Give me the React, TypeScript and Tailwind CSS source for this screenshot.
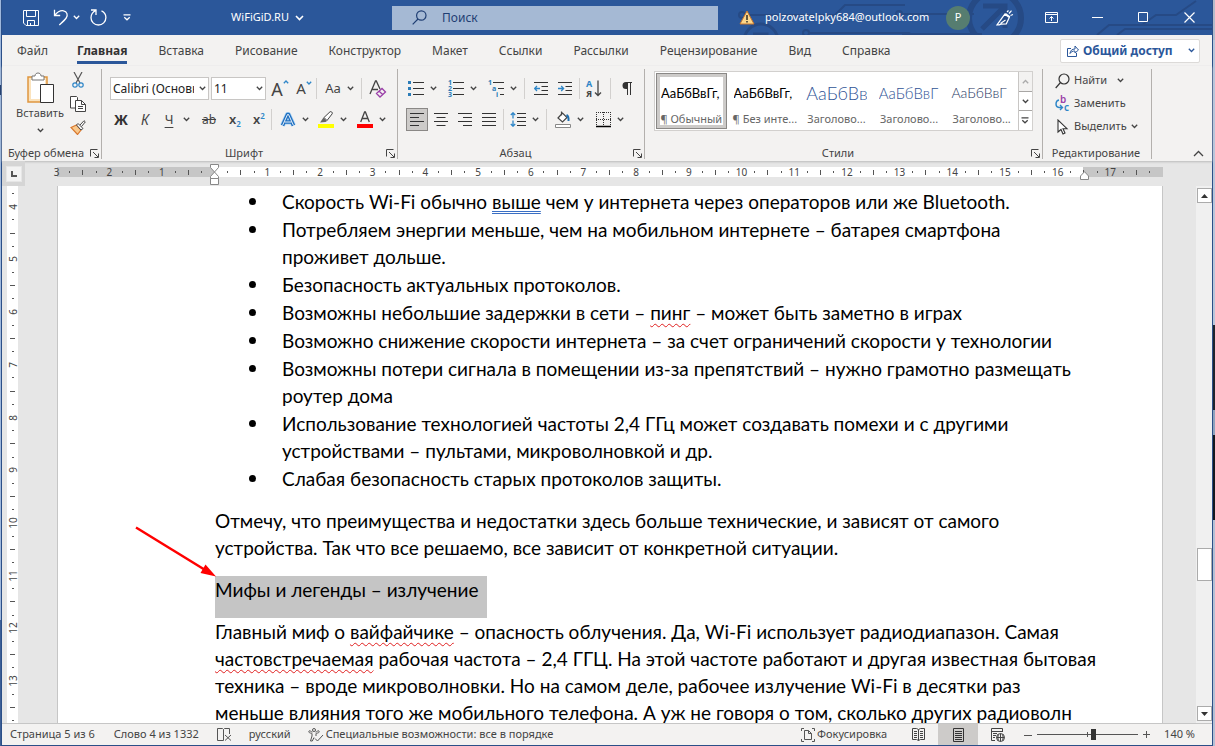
import type { ReactNode } from "react"

const TABS = [
  "Файл",
  "Главная",
  "Вставка",
  "Рисование",
  "Конструктор",
  "Макет",
  "Ссылки",
  "Рассылки",
  "Рецензирование",
  "Вид",
  "Справка",
]

const STYLES = [
  { label: "¶ Обычный", sample: "АаБбВвГг,", text: "text-[13px] text-black", selected: true },
  { label: "¶ Без инте...", sample: "АаБбВвГг,", text: "text-[13px] text-black" },
  { label: "Заголово...", sample: "АаБбВвГ", text: "text-lg font-light text-[#2f5496]" },
  { label: "Заголово...", sample: "АаБбВвГ", text: "text-[15px] font-light text-[#2f5496]" },
  { label: "Заголово...", sample: "АаБбВвГ", text: "text-sm font-light text-[#1f3763]" },
]

// quarter-centimetre marks: number, dot, tick, dot
const H_MARKS = Array.from({ length: 84 }, (_, i) => i - 12)
const V_MARKS = Array.from({ length: 41 }, (_, i) => i + 15)

export default function App() {
  return (
    <div className="flex h-screen w-full overflow-hidden bg-[linear-gradient(#9fb8dc_0_85px,#1b3a6b_85px_95px,#9fb8dc_95px_620px,#3d5f96_620px)] pl-px font-['Noto_Sans',sans-serif] text-xs text-[#444]">
      <div className="flex min-w-0 flex-1 flex-col border-x border-b border-[#2b4f88] bg-[#e6e6e6]">
        <TitleBar />
        <TabBar />
        <Ribbon />
        <Workspace />
        <StatusBar />
      </div>
      <div className="w-0.5 shrink-0 bg-[linear-gradient(#b4bccb_0_40px,#b9c6da_40px_325px,#20242c_325px_410px,#8fa3bd_410px_435px,#15181f_435px_520px,#b4c0d4_520px)]" />
    </div>
  )
}

function Chevron({ className = "" }: { className?: string }) {
  return (
    <svg width="7" height="5" viewBox="0 0 7 5" fill="none" stroke="currentColor" strokeWidth="1.3" className={className}>
      <path d="M.8.8 3.500 3.500 6.200.8" />
    </svg>
  )
}

/* ---------- title bar ---------- */

function TitleBar() {
  return (
    <header className="relative flex h-[35px] shrink-0 items-center overflow-hidden bg-[#2b579a] text-white">
      <Circuit />
      <div className="relative flex w-[390px] shrink-0 items-center">
        <button aria-label="Сохранить" className="ml-[21px]">
          <svg width="16" height="16" viewBox="0 0 16 16" fill="none" stroke="currentColor">
            <path d="M.5.5h15v15H3L.5 13zM3.500.5v6h9v-6M4.500 15.500v-5h7v5M7.500 13v2.500" />
          </svg>
        </button>
        <button aria-label="Отменить" className="ml-3.5">
          <svg width="16" height="17" viewBox="0 0 16 17" fill="none" stroke="currentColor" strokeWidth="1.300">
            <path d="M1.500.8v5.700h5.700M1.700 6.300C4 3.500 7 1.200 10.500 1.800c3.600.7 4.700 4.400 2.700 7.200C11.700 11.200 9 13.500 6.300 16" />
          </svg>
        </button>
        <button aria-label="Список отмены" className="ml-1">
          <Chevron />
        </button>
        <button aria-label="Повторить" className="ml-2.5">
          <svg width="17" height="17" viewBox="0 0 17 17" fill="none" stroke="currentColor" strokeWidth="1.300">
            <path d="M1 1h5v5M5.800 1.500C2.500 3 1 5.500 1 8.700c0 4 3.300 7.300 7.400 7.300s7.500-3.200 7.500-7.400c0-3-1.700-5.500-4.400-6.700" />
          </svg>
        </button>
        <button aria-label="Настройка панели быстрого доступа" className="ml-4">
          <svg width="8" height="7" viewBox="0 0 8 7" fill="none" stroke="currentColor" strokeWidth="1.200">
            <path d="M.5.8h7M1.300 3.200 4 5.800l2.700-2.600" />
          </svg>
        </button>
        <button className="ml-auto mr-[88px] flex items-center gap-1.5">
          <span className="text-[11px]">WiFiGiD.RU</span>
          <svg width="9" height="6" viewBox="0 0 9 6" fill="none" stroke="currentColor" strokeWidth="1.600">
            <path d="M1 1l3.500 3.500L8 1" />
          </svg>
        </button>
      </div>
      <label className="relative flex h-6 min-w-0 flex-1 items-center bg-[#a5b9d4] pl-5 text-[#1f3e73]">
        <svg width="15" height="15" viewBox="0 0 15 15" fill="none" stroke="currentColor" strokeWidth="1.200">
          <circle cx="9.300" cy="5.500" r="4.700" />
          <path d="M6 9 .7 14.300" />
        </svg>
        <input
          type="search"
          aria-label="Поиск"
          placeholder="Поиск"
          className="ml-[15px] min-w-0 flex-1 bg-transparent text-xs outline-none placeholder:text-[#1f3e73]"
        />
      </label>
      <div className="relative flex w-[494px] shrink-0 items-center">
        <svg width="16" height="15" viewBox="0 0 16 15" className="ml-[21px]">
          <path d="M8 1 15 14H1z" fill="#fcd68a" stroke="#c9762b" />
          <path d="M7.300 5h1.400v5H7.300zM7.300 11h1.400v1.500H7.300z" fill="#222" />
        </svg>
        <span className="ml-2.5 text-[11px]">polzovatelpky684@outlook.com</span>
        <div className="ml-auto flex items-center">
          <button aria-label="Учетная запись" className="mr-3 size-6 rounded-full bg-[#567d70] text-[11px]">
            P
          </button>
          <TitleButton label="Рукописный ввод">
            <svg width="18" height="17" viewBox="0 0 18 17" fill="none" stroke="currentColor" strokeWidth="1.200">
              <path d="M1 15.800 8.800 5.200l4.500 3.300-3 6.300-5.300.3-1.800.7zM4.500 14.500l5-3.500M9.500 4.500l4.500 3.500M11 3l1.500-1.500M13 4.500l2.500-2.800M14.500 6.500l2.500-1" />
            </svg>
          </TitleButton>
          <TitleButton label="Параметры ленты">
            <svg width="13" height="11" viewBox="0 0 13 11" fill="none" stroke="currentColor">
              <path d="M.5.5h12v10H.5zM.5 2.500h12M6.500 9V4.500M4.500 6.500l2-2 2 2" />
            </svg>
          </TitleButton>
          <TitleButton label="Свернуть">
            <svg width="11" height="11" viewBox="0 0 11 11" stroke="currentColor">
              <path d="M0 5.500h11" />
            </svg>
          </TitleButton>
          <TitleButton label="Развернуть">
            <svg width="11" height="11" viewBox="0 0 11 11" fill="none" stroke="currentColor">
              <path d="M.5.5h9v9h-9z" />
            </svg>
          </TitleButton>
          <TitleButton label="Закрыть">
            <svg width="11" height="11" viewBox="0 0 11 11" stroke="currentColor" strokeWidth="1.200">
              <path d="M.5.5l10 10M10.500.5l-10 10" />
            </svg>
          </TitleButton>
        </div>
      </div>
    </header>
  )
}

function TitleButton({ label, children }: { label: string; children: ReactNode }) {
  return (
    <button aria-label={label} className="flex h-[35px] w-[46px] items-center justify-center">
      {children}
    </button>
  )
}

function Circuit() {
  return (
    <svg width="500" height="35" viewBox="0 0 500 35" fill="none" stroke="#264a85" className="absolute right-0 top-0">
      <circle cx="30" cy="15" r="3" strokeWidth="2" />
      <path d="M33 15h90l10-10h60" strokeWidth="2" />
      <circle cx="49" cy="41" r="17" strokeWidth="3" />
      <path d="M41 34h14v6" strokeWidth="3" />
      <circle cx="94" cy="33" r="3" strokeWidth="2" />
      <path d="M97 33h100l8 5M270 34h-80" strokeWidth="2" />
      <circle cx="187" cy="14" r="3" strokeWidth="2" />
      <path d="M190 14h72" strokeWidth="2" />
      <circle cx="283" cy="18" r="26" strokeWidth="6" />
      <path d="M271 6h22v22M292 7l-22 22" strokeWidth="5" />
      <path d="M385 35l12-10h103M405 35l8-6h87M430 25l14-10h20l20-14" strokeWidth="2" />
    </svg>
  )
}

/* ---------- ribbon ---------- */

function TabBar() {
  return (
    <nav className="flex h-[31px] shrink-0 items-center bg-[#f3f2f1] pl-[15px] pr-3">
      <div className="flex items-center gap-[31px]">
        {TABS.map((tab) => (
          <button
            key={tab}
            className={
              tab === "Главная"
                ? "-ml-0.5 border-b-3 border-[#2b579a] pt-[3px] font-bold leading-[21px] text-[#333]"
                : "leading-[21px]"
            }
          >
            {tab}
          </button>
        ))}
      </div>
      <button className="ml-auto flex h-6 w-[140px] items-center rounded-xs border border-[#dcdad8] bg-white pl-1.5 pr-1 font-bold text-[#2b579a]">
        <svg width="12" height="12" viewBox="0 0 12 12" fill="none" stroke="currentColor">
          <path d="M4 3.500H.5v8h9V8M3 8.500c.3-3 2-4.500 5-4.500V1l3.500 4L8 8V6C5.500 6 4 6.800 3 8.500z" />
        </svg>
        <span className="ml-1 flex-1 text-left">Общий доступ</span>
        <Chevron />
      </button>
    </nav>
  )
}

function Ribbon() {
  return (
    <section className="flex h-[95px] shrink-0 bg-[#f3f2f1] pb-0.5 pt-[3px] shadow-[0_1px_2px_#bbb]">
      <Group title="Буфер обмена" launcher className="w-[100px]">
        <div className="flex pl-3 pt-[3px]">
          <button className="flex w-[52px] flex-col items-center">
            <svg width="28" height="32" viewBox="0 0 28 32" fill="none">
              <path d="M2 5h19v25H2z" fill="#fbe3bd" stroke="#e0973f" strokeWidth="1.500" />
              <path d="M5 8h14v19H5z" fill="#fff" />
              <path d="M6 8V4h3c0-4 6-4 6 0h3v4z" fill="#fff" stroke="#777" />
              <path d="M14.500 12.500h13v18h-13z" fill="#fff" stroke="#333" />
            </svg>
            <span className="text-[11px] leading-[18px]">Вставить</span>
            <Chevron className="mt-1.5" />
          </button>
          <div className="flex w-6 flex-col items-center gap-2">
            <button aria-label="Вырезать">
              <svg width="12" height="16" viewBox="0 0 12 16" fill="none" strokeWidth="1.200">
                <path d="M2 0l6 11M10 0 4 11" stroke="#555" />
                <circle cx="3" cy="13" r="2.200" stroke="#2e86c8" />
                <circle cx="9" cy="13" r="2.200" stroke="#2e86c8" />
              </svg>
            </button>
            <button aria-label="Копировать">
              <svg width="16" height="16" viewBox="0 0 16 16" fill="#fff" stroke="#444">
                <path d="M.5.5h6l1 1V12h-7z" />
                <path d="M5.500 4.500h6l4 4v7h-10z" />
                <path d="M11.500 4.500v4h4M8 10.500h5M8 12.500h5" fill="none" />
              </svg>
            </button>
            <button aria-label="Формат по образцу">
              <svg width="16" height="15" viewBox="0 0 16 15" fill="none">
                <path d="M1 7.500 6.500 5l4.500 5-3.500 4.500z" fill="#f9c98d" stroke="#d9782d" strokeWidth="1.200" />
                <path d="M6.500 5 8 3.500l5 5-2 1.500zM10 5l4-4.300 1.300 1.200L11.500 6.500" fill="#fff" stroke="#444" />
              </svg>
            </button>
          </div>
        </div>
      </Group>

      <Group title="Шрифт" launcher className="w-[296px]">
        <div className="mt-2 flex h-[23px] items-center pl-2">
          <Combo label="Шрифт" value="Calibri (Основной текст)" className="w-[99px]" />
          <Combo label="Размер шрифта" value="11" className="ml-0.5 w-[55px]" />
          <Tool label="Увеличить размер шрифта" className="ml-0.5 w-6">
            <SizeGlyph size="text-lg" up />
          </Tool>
          <Tool label="Уменьшить размер шрифта" className="w-6">
            <SizeGlyph size="text-[15px]" />
          </Tool>
          <Divider />
          <Split label="Регистр" className="ml-1.5">
            <span className="text-[13px]">Aa</span>
          </Split>
          <Divider className="ml-1" />
          <Tool label="Удалить все форматирование" className="ml-1 w-6">
            <svg width="18" height="18" viewBox="0 0 18 18" fill="none" strokeWidth="1.300">
              <path d="M1 14 6.500 1h.8L11 9M3 9.500h6" stroke="#444" />
              <path d="M7.500 13.500l5.500-5 3.500 3.500-5.500 5zM10 11l3.500 3.500" stroke="#9a3fa8" />
            </svg>
          </Tool>
        </div>
        <div className="mt-2 flex h-[23px] items-center pl-[7px] text-sm">
          <Tool label="Полужирный" className="w-6 font-bold text-[#333]">
            Ж
          </Tool>
          <Tool label="Курсив" className="w-6 italic">
            К
          </Tool>
          <Split label="Подчеркнутый" className="ml-0.5">
            <span className="text-[13px] underline underline-offset-3">Ч</span>
          </Split>
          <Tool label="Зачеркнутый" className="ml-1 w-6">
            <span className="text-xs line-through">ab</span>
          </Tool>
          <Tool label="Подстрочный знак" className="ml-0.5 w-6">
            <span className="text-[13px] font-semibold">x</span>
            <span className="mt-2 text-[8px] font-semibold text-[#2e86c8]">2</span>
          </Tool>
          <Tool label="Надстрочный знак" className="w-6">
            <span className="text-[13px] font-semibold">x</span>
            <span className="mb-2 text-[8px] font-semibold text-[#2e86c8]">2</span>
          </Tool>
          <Divider />
          <Split label="Текстовые эффекты" className="ml-1.5">
            <svg width="16" height="16" viewBox="0 0 16 16" fill="none" strokeLinejoin="round">
              <path d="M2.500 13.500 7.500 2.500h1l5 11M4.500 10h7" stroke="#a9d2f3" strokeWidth="5" />
              <path d="M2.500 13.500 7.500 2.500h1l5 11M4.500 10h7" stroke="#1f6fc0" strokeWidth="3.500" />
              <path d="M2.500 13.500 7.500 2.500h1l5 11M4.500 10h7" stroke="#fff" strokeWidth=".9" />
            </svg>
          </Split>
          <Split label="Цвет выделения текста" className="ml-1">
            <svg width="16" height="17" viewBox="0 0 16 17" fill="none">
              <path d="M6 6.500 12 .8c1-.8 3 .8 2.200 2L9 9.500z" fill="#fff" stroke="#444" />
              <path d="M5.500 6.500 9 10l-1.500 1-5.500.5z" fill="#666" />
              <path d="M0 13h16v4H0z" fill="#ff0" />
            </svg>
          </Split>
          <Split label="Цвет шрифта" className="ml-[5px]">
            <svg width="16" height="17" viewBox="0 0 16 17" fill="none">
              <path d="M3.700 11 7.600 1h.8l3.900 10M5 7.500h6" stroke="#444" strokeWidth="1.300" />
              <path d="M0 13h16v4H0z" fill="#f00" />
            </svg>
          </Split>
        </div>
      </Group>

      <Group title="Абзац" launcher className="w-[247px]">
        <div className="mt-2 flex h-[23px] items-center pl-2">
          <Split label="Маркеры">
            <svg width="16" height="16" viewBox="0 0 16 16">
              <path d="M0 0h3v3H0zM0 6h3v3H0zM0 12h3v3H0z" fill="#2b7cb8" />
              <path d="M5 1.500h11M5 7.500h11M5 13.500h11" stroke="#333" />
            </svg>
          </Split>
          <Split label="Нумерация" className="ml-1.5">
            <svg width="16" height="17" viewBox="0 0 16 17" className="overflow-visible">
              <NumberGlyphs items={["1", "2", "3"]} x={[0, 0, 0]} />
              <path d="M5 2.500h11M5 8.500h11M5 14.500h11" stroke="#333" />
            </svg>
          </Split>
          <Split label="Многоуровневый список" className="ml-1.5">
            <svg width="16" height="17" viewBox="0 0 16 17" className="overflow-visible">
              <NumberGlyphs items={["1", "a", "i"]} x={[0, 4, 8]} />
              <path d="M5 2.500h11M10 8.500h6M12 14.500h4" stroke="#333" />
            </svg>
          </Split>
          <Divider className="ml-1" />
          <Tool label="Уменьшить отступ" className="ml-1 w-6">
            <IndentIcon arrow="M6 6.500H.8M3 4 .6 6.500 3 9" />
          </Tool>
          <Tool label="Увеличить отступ" className="w-6">
            <IndentIcon arrow="M0 6.500h5.500M3.200 4l2.400 2.500L3.200 9" />
          </Tool>
          <Divider className="ml-0.5" />
          <Tool label="Сортировка" className="ml-0.5 w-6">
            <svg width="16" height="17" viewBox="0 0 16 17" fill="none" strokeWidth="1.300" className="overflow-visible">
              <text x="0" y="7" fontSize="9" fontWeight="700" fill="#2e86c8">
                А
              </text>
              <text x="0" y="17" fontSize="9" fontWeight="700" fill="#444">
                Я
              </text>
              <path d="M12 .5v15M9 12.500l3 3 3-3" stroke="#444" />
            </svg>
          </Tool>
          <Divider className="ml-1" />
          <Tool label="Отобразить все знаки" className="ml-1 w-6">
            <svg width="10" height="13" viewBox="0 0 10 13">
              <path d="M4.500 0H10v1H9v12H8V1H6v12H5V7H4a3.500 3.500 0 0 1 0-7z" fill="#333" />
            </svg>
          </Tool>
        </div>
        <div className="mt-2 flex h-[23px] items-center pl-2">
          <Tool label="По левому краю" className="w-[22px] border border-[#8a8886] bg-[#cdcbc9]">
            <AlignIcon d="M0 .5h14M0 4.500h9M0 8.500h14M0 12.500h9" />
          </Tool>
          <Tool label="По центру" className="ml-px w-6">
            <AlignIcon d="M0 .5h14M2.500 4.500h9M0 8.500h14M2.500 12.500h9" />
          </Tool>
          <Tool label="По правому краю" className="w-6">
            <AlignIcon d="M0 .5h14M5 4.500h9M0 8.500h14M5 12.500h9" />
          </Tool>
          <Tool label="По ширине" className="w-6">
            <AlignIcon d="M0 .5h14M0 4.500h14M0 8.500h14M0 12.500h14" />
          </Tool>
          <Divider className="ml-0.5" />
          <Split label="Интервал" className="ml-1">
            <svg width="16" height="15" viewBox="0 0 16 15" fill="none">
              <path d="M3 .8v5.700M3 8.500v5.700M.8 3 3 .8 5.200 3M.8 12 3 14.200 5.200 12" stroke="#2e86c8" strokeWidth="1.300" />
              <path d="M7 1.500h9M7 5.500h9M7 9.500h9M7 13.500h9" stroke="#333" />
            </svg>
          </Split>
          <Divider className="ml-1" />
          <Split label="Заливка" className="ml-1.5">
            <svg width="16" height="17" viewBox="0 0 16 17" fill="none">
              <path d="M6.500.5v4M3 7l4.500-5 4.500 4.500L7.500 11z" fill="#fff" stroke="#444" strokeWidth="1.200" />
              <path d="M11.500 4c2 1 2.300 3 2 6" stroke="#1f6fb0" strokeWidth="2" />
              <path d="M.5 13.500h15v3H.5z" fill="#fff" stroke="#888" />
            </svg>
          </Split>
          <Split label="Границы" className="ml-1.5">
            <svg width="15" height="16" viewBox="0 0 15 16">
              <path d="M0 .5h15M0 7.500h15M.5 0v14M7.500 0v14M14.500 0v14" stroke="#333" strokeDasharray="1 1" />
              <path d="M0 14.500h15" stroke="#000" strokeWidth="1.500" />
            </svg>
          </Split>
        </div>
      </Group>

      <Group title="Стили" launcher className="min-w-0 flex-1">
        <div className="mx-[9px] mt-0.5 flex h-[60px] border border-[#d2d0ce] bg-white">
          {STYLES.map((s, i) => (
            <button
              key={i}
              className={`m-px flex min-w-0 flex-1 flex-col overflow-hidden whitespace-nowrap border ${
                s.selected ? "border-[#8a8886] ring-3 ring-inset ring-[#cdcbc9]" : "border-transparent"
              }`}
            >
              <span
                className={`mx-1 flex h-10 items-center self-stretch overflow-hidden font-[Lato,sans-serif] leading-none ${s.text}`}
              >
                {s.sample}
              </span>
              <span className="mx-[3px] h-4 text-[11px] leading-3 text-[#666]">{s.label}</span>
            </button>
          ))}
          <div className="flex w-3.5 shrink-0 flex-col border-l border-[#c8c6c4]">
            <button aria-label="Вверх" className="flex flex-1 items-center justify-center bg-[#f3f2f1] text-[#aaa]">
              <Chevron className="rotate-180" />
            </button>
            <button aria-label="Вниз" className="flex flex-1 items-center justify-center border-y border-[#a8a6a4]">
              <Chevron />
            </button>
            <button aria-label="Дополнительно" className="flex flex-1 items-center justify-center">
              <svg width="8" height="7" viewBox="0 0 8 7" fill="none" stroke="currentColor" strokeWidth="1.200">
                <path d="M.5.8h7M1.300 3.200 4 5.800l2.700-2.600" />
              </svg>
            </button>
          </div>
        </div>
      </Group>

      <Group title="Редактирование" className="w-[109px]">
        <div className="flex flex-col pl-3 text-[11px]">
          <button className="flex h-[23px] items-center gap-1">
            <svg width="15" height="16" viewBox="0 0 15 16" fill="none" stroke="#333" strokeWidth="1.200">
              <circle cx="9" cy="6" r="5" />
              <path d="M5.500 9.500.7 15" />
            </svg>
            Найти
            <Chevron className="ml-1.5" />
          </button>
          <button className="flex h-[23px] items-center gap-1">
            <svg width="15" height="17" viewBox="0 0 15 17" fill="none" stroke="#2e86c8" strokeWidth="1.400" className="overflow-visible">
              <text x="5" y="8" fontSize="10" fontWeight="600" fill="#9a3fa8" stroke="none">
                b
              </text>
              <text x="9" y="16" fontSize="10" fontWeight="600" fill="#2e86c8" stroke="none">
                c
              </text>
              <path d="M4 5C0 6 0 12 4 12.500h3M5 10l2.500 2.500L5 15" />
            </svg>
            Заменить
          </button>
          <button className="flex h-[23px] items-center gap-1">
            <svg width="15" height="16" viewBox="0 0 15 16" fill="#fff" stroke="#333" strokeWidth="1.100">
              <path d="M3 1v12l3-2.500 2 4.500 2-1-2-4.300h4z" />
            </svg>
            Выделить
            <Chevron />
          </button>
        </div>
      </Group>

      <button aria-label="Свернуть ленту" className="ml-auto flex w-[60px] items-end justify-end pb-0.5 pr-2">
        <svg width="11" height="7" viewBox="0 0 11 7" fill="none" stroke="#444" strokeWidth="1.300">
          <path d="M1 6l4.500-4.500L10 6" />
        </svg>
      </button>
    </section>
  )
}

function Group({
  title,
  launcher,
  className,
  children,
}: {
  title: string
  launcher?: boolean
  className: string
  children: ReactNode
}) {
  return (
    <div className={`flex shrink-0 flex-col border-r border-[#b3b0ad] ${className}`}>
      <div className="flex-1">{children}</div>
      <div className="flex h-3 items-center pr-[2px] leading-3">
        <span className="flex-1 text-center text-[11px]">{title}</span>
        {launcher && (
          <button aria-label={`${title}: параметры`}>
            <svg width="9" height="9" viewBox="0 0 9 9" fill="none" stroke="#444">
              <path d="M.5 7.500v-7h7M3 3l5 5M8.500 4.500v4h-4" />
            </svg>
          </button>
        )}
      </div>
    </div>
  )
}

function Combo({ label, value, className }: { label: string; value: string; className: string }) {
  return (
    <div className={`relative h-[23px] ${className}`}>
      <select
        aria-label={label}
        className="size-full appearance-none border border-[#c8c6c4] bg-white pl-0.5 pr-3.5 text-xs text-[#222] outline-none"
      >
        <option>{value}</option>
      </select>
      <Chevron className="pointer-events-none absolute right-[3px] top-[9px]" />
    </div>
  )
}

function Tool({ label, className, children }: { label: string; className: string; children: ReactNode }) {
  return (
    <button aria-label={label} className={`flex h-[23px] shrink-0 items-center justify-center ${className}`}>
      {children}
    </button>
  )
}

function Split({ label, className = "", children }: { label: string; className?: string; children: ReactNode }) {
  return (
    <div className={`flex shrink-0 ${className}`}>
      <Tool label={label} className="w-5">
        {children}
      </Tool>
      <Tool label={`${label}: список`} className="w-3.5">
        <Chevron />
      </Tool>
    </div>
  )
}

function Divider({ className = "" }: { className?: string }) {
  return <div className={`h-[21px] w-px shrink-0 bg-[#d2d0ce] ${className}`} />
}

function SizeGlyph({ size, up }: { size: string; up?: boolean }) {
  return (
    <span className="flex items-start leading-none">
      <span className={`leading-none ${size}`}>A</span>
      <svg width="6" height="4" viewBox="0 0 6 4" fill="none" stroke="#2e86c8" strokeWidth="1.300">
        <path d={up ? "M.8 3.300 3 1l2.200 2.300" : "M.8.7 3 3 5.200.7"} />
      </svg>
    </span>
  )
}

function NumberGlyphs({ items, x }: { items: string[]; x: number[] }) {
  return (
    <g fontSize="7" fontWeight="700" fill="#2b7cb8">
      {items.map((c, i) => (
        <text key={c} x={x[i]} y={5 + i * 6}>
          {c}
        </text>
      ))}
    </g>
  )
}

function IndentIcon({ arrow }: { arrow: string }) {
  return (
    <svg width="14" height="14" viewBox="0 0 14 14" fill="none" stroke="#333">
      <path d="M0 .5h14M7.500 4.500H14M7.500 8.500H14M0 12.500h14" />
      <path d={arrow} stroke="#2e86c8" strokeWidth="1.300" />
    </svg>
  )
}

function AlignIcon({ d }: { d: string }) {
  return (
    <svg width="14" height="13" viewBox="0 0 14 13" stroke="#333">
      <path d={d} />
    </svg>
  )
}

/* ---------- document ---------- */

function Mark({ n, vertical }: { n: number; vertical?: boolean }) {
  if (n === 0) return null
  const step = Math.abs(n) % 4
  if (step === 0) return <span className={vertical ? "-rotate-90" : ""}>{Math.abs(n) / 4}</span>
  if (step === 2) return <span className={vertical ? "h-px w-[5px] bg-[#555]" : "h-[5px] w-px bg-[#555]"} />
  return <span className={vertical ? "h-px w-0.5 bg-[#555]" : "h-0.5 w-px bg-[#555]"} />
}

function Workspace() {
  return (
    <main className="flex min-h-0 flex-1 flex-col">
      <div className="flex h-[25px] shrink-0">
        <div className="flex w-[23px] items-center justify-center bg-[#d5d5d5]">
          <div className="flex size-4 items-center justify-center border border-[#e6e6e6] bg-[#f3f3f3]">
            <svg width="6" height="6" viewBox="0 0 6 6" fill="none" stroke="#555" strokeWidth="2">
              <path d="M1 0v5h5" />
            </svg>
          </div>
        </div>
        <div className="relative ml-8 mr-[49px] mt-1.5 h-2.5 flex-1 bg-[linear-gradient(to_right,#c6c6c6_157px,#fff_157px,#fff_calc(100%-80px),#c6c6c6_calc(100%-80px))]">
          <div className="-ml-[7px] flex h-2.5 w-full text-[10px] leading-none">
            {H_MARKS.map((n) => (
              <div key={n} className="flex w-0 flex-1 items-center justify-center">
                <Mark n={n} />
              </div>
            ))}
          </div>
          <svg width="9" height="21" viewBox="0 0 9 21" fill="#fff" stroke="#888" className="absolute -top-[3px] left-[153px]">
            <path d="M.5.5h8v3L4.500 8 .5 3.500zM4.500 8l4 4.500v2h-8v-2zM.5 14.500h8v6h-8z" />
          </svg>
          <svg width="9" height="9" viewBox="0 0 9 9" fill="#fff" stroke="#888" className="absolute right-[74px] top-1">
            <path d="M.5 8.500V5L4.500.7 8.500 5v3.500z" />
          </svg>
        </div>
      </div>

      <div className="flex min-h-0 flex-1">
        <div className="ml-[5px] w-[11px] shrink-0 overflow-hidden bg-white pt-px">
          <div className="flex h-[540px] flex-col text-[10px] leading-none">
            {V_MARKS.map((n) => (
              <div key={n} className="flex h-0 flex-1 items-center justify-center">
                <Mark n={n} vertical />
              </div>
            ))}
          </div>
        </div>
        <Page />
        <div className="flex w-4 shrink-0 flex-col items-center bg-[#f0f0f0] pb-0.5 pt-0.5">
          <button aria-label="Прокрутить вверх" className="flex h-[15px] w-[15px] items-center justify-center border border-[#ababab] bg-white">
            <svg width="7" height="4" viewBox="0 0 7 4" fill="#333">
              <path d="M3.500 0 7 4H0z" />
            </svg>
          </button>
          <div className="flex-[346]" />
          <div className="h-[33px] w-[15px] border border-[#ababab] bg-white" />
          <div className="flex-[126]" />
          <button aria-label="Прокрутить вниз" className="flex h-[15px] w-[15px] items-center justify-center border border-[#ababab] bg-white">
            <svg width="7" height="4" viewBox="0 0 7 4" fill="#333">
              <path d="M3.500 4 7 0H0z" />
            </svg>
          </button>
        </div>
      </div>
    </main>
  )
}

function Typo({ children }: { children: ReactNode }) {
  return (
    <span className="underline decoration-[#e02020] decoration-wavy decoration-1 underline-offset-3 [text-decoration-skip-ink:none]">
      {children}
    </span>
  )
}

function Page() {
  return (
    <article className="relative ml-[39px] mr-[33px] min-w-0 flex-1 overflow-hidden whitespace-nowrap border-x border-[#c6c6c6] bg-white pl-[157px] pt-0.5 font-[Lato,sans-serif] text-[19px] leading-[27px] text-black">
      <ul className="mb-[15px] flex flex-col gap-px pl-[67px]">
        <Item>
          Скорость Wi-Fi обычно{" "}
          <span className="underline decoration-[#3a6fc4] decoration-double decoration-1 underline-offset-2">выше</span> чем у
          интернета через операторов или же Bluetooth.
        </Item>
        <Item>
          Потребляем энергии меньше, чем на мобильном интернете – батарея смартфона
          <br />
          проживет дольше.
        </Item>
        <Item>Безопасность актуальных протоколов.</Item>
        <Item>
          Возможны небольшие задержки в сети – <Typo>пинг</Typo> – может быть заметно в играх
        </Item>
        <Item>Возможно снижение скорости интернета – за счет ограничений скорости у технологии</Item>
        <Item>
          Возможны потери сигнала в помещении из-за препятствий – нужно грамотно размещать
          <br />
          роутер дома
        </Item>
        <Item>
          Использование технологией частоты 2,4 ГГц может создавать помехи и с другими
          <br />
          устройствами – пультами, микроволновкой и др.
        </Item>
        <Item>Слабая безопасность старых протоколов защиты.</Item>
      </ul>
      <p className="mb-[15px]">
        Отмечу, что преимущества и недостатки здесь больше технические, и зависят от самого
        <br />
        устройства. Так что все решаемо, все зависит от конкретной ситуации.
      </p>
      <h2 className="w-[272px] bg-[#c5c5c5] pb-[15px]">Мифы и легенды – излучение</h2>
      <p>
        Главный миф о <Typo>вайфайчике</Typo> – опасность облучения. Да, Wi-Fi использует радиодиапазон. Самая
        <br />
        <Typo>частовстречаемая</Typo> рабочая частота – 2,4 ГГЦ. На этой частоте работают и другая известная бытовая
        <br />
        техника – вроде микроволновки. Но на самом деле, рабочее излучение Wi-Fi в десятки раз
        <br />
        меньше влияния того же мобильного телефона. А уж не говоря о том, сколько других радиоволн
      </p>
      <svg width="84" height="54" viewBox="0 0 84 54" className="absolute left-[76px] top-[339px]">
        <path d="M2 2.500 72 45.500" stroke="#f00" strokeWidth="2.500" />
        <path d="M82 51.500 66.500 48 71.500 39.500z" fill="#f00" />
      </svg>
    </article>
  )
}

function Item({ children }: { children: ReactNode }) {
  return (
    <li className="flex">
      <span className="-ml-[33px] mr-[26px] mt-2.5 size-[7px] shrink-0 rounded-full bg-black" />
      <span>{children}</span>
    </li>
  )
}

/* ---------- status bar ---------- */

function StatusBar() {
  return (
    <footer className="flex h-[22px] shrink-0 items-center border-t border-[#c6c6c6] bg-[#f3f2f1] pl-2 text-[11px]">
      <span>Страница 5 из 6</span>
      <span className="ml-[19px]">Слово 4 из 1332</span>
      <button aria-label="Правописание" className="ml-[18px]">
        <svg width="15" height="13" viewBox="0 0 15 13" fill="none" stroke="#555">
          <path d="M6.500 12.500h-6V.5h5l1 1V9M6.500 1.500l1-1h5V6M6.500 9v3.500M8 7l6 5.500M14 7l-6 5.500" />
        </svg>
      </button>
      <button className="ml-[17px]">русский</button>
      <button className="ml-[17px] flex items-center gap-0.5">
        <svg width="16" height="14" viewBox="0 0 16 14" fill="none" stroke="#555">
          <circle cx="6" cy="2" r="1.500" />
          <path d="M1 3c-1 2 2 2 3 2.500V8l-1.500 5h1.800L6 9.500M11 3c1 2-2 2-3 2.500V8M1 3c1-1 2 1 3.500 1M11 3c-1-1-2 1-3.500 1M7 10.500l2.500 2.500L15 7" />
        </svg>
        Специальные возможности: все в порядке
      </button>
      <button className="ml-auto flex items-center gap-0.5">
        <svg width="14" height="14" viewBox="0 0 14 14" fill="none" stroke="#555">
          <path d="M3 .5H.5V3M11 .5h2.500V3M3 13.500H.5V11M11 13.500h2.500V11M3.500 2.500h4l3 3v6h-7zM7.500 2.500v3h3" />
        </svg>
        Фокусировка
      </button>
      <button aria-label="Режим чтения" className="ml-[11px] flex h-[21px] w-10 items-center justify-center">
        <svg width="13" height="13" viewBox="0 0 13 13" fill="none" stroke="#444">
          <path d="M.5.5h4l2 1 2-1h4v11h-4l-2 1-2-1h-4zM6.500 1.500v11M2 3.500h3M2 5.500h3M2 7.500h3M2 9.500h3M8 3.500h3M8 5.500h3M8 7.500h3M8 9.500h3" />
        </svg>
      </button>
      <button aria-label="Разметка страницы" className="flex h-[21px] w-10 items-center justify-center bg-[#cdcbc9]">
        <svg width="11" height="14" viewBox="0 0 11 14" fill="none" stroke="#333">
          <path d="M.5.5h10v13H.5zM2 3.500h7M2 5.500h7M2 7.500h7M2 9.500h7M2 11.500h7" />
        </svg>
      </button>
      <button aria-label="Веб-документ" className="flex h-[21px] w-10 items-center justify-center">
        <svg width="14" height="14" viewBox="0 0 14 14" fill="none" stroke="#444">
          <path d="M4 12.500H.5V.5h11V4M.5 3.500h11M2 5.500h4M2 7.500h3M2 9.500h2" />
          <circle cx="9.500" cy="9.500" r="4" fill="#f3f2f1" />
          <path d="M9.500 5.500v8M5.500 9.500h8M7.500 6.500c-.8 2-.8 4 0 6M11.500 6.500c.8 2 .8 4 0 6" />
        </svg>
      </button>
      <button aria-label="Уменьшить" className="ml-1.5">
        <svg width="8" height="8" viewBox="0 0 8 8" stroke="#555">
          <path d="M0 4.500h8" />
        </svg>
      </button>
      <input
        type="range"
        aria-label="Масштаб"
        min="0"
        max="100"
        defaultValue="56"
        className="mx-[5px] h-3 w-[101px] appearance-none bg-[linear-gradient(#555,#555),linear-gradient(#555,#555)] bg-[length:100%_1px,1px_5px] bg-center bg-no-repeat [&::-webkit-slider-thumb]:h-[11px] [&::-webkit-slider-thumb]:w-[5px] [&::-webkit-slider-thumb]:appearance-none [&::-webkit-slider-thumb]:bg-[#333]"
      />
      <button aria-label="Увеличить">
        <svg width="7" height="7" viewBox="0 0 7 7" stroke="#555">
          <path d="M0 3.500h7M3.500 0v7" />
        </svg>
      </button>
      <span className="ml-3.5 mr-[17px]">140 %</span>
    </footer>
  )
}
